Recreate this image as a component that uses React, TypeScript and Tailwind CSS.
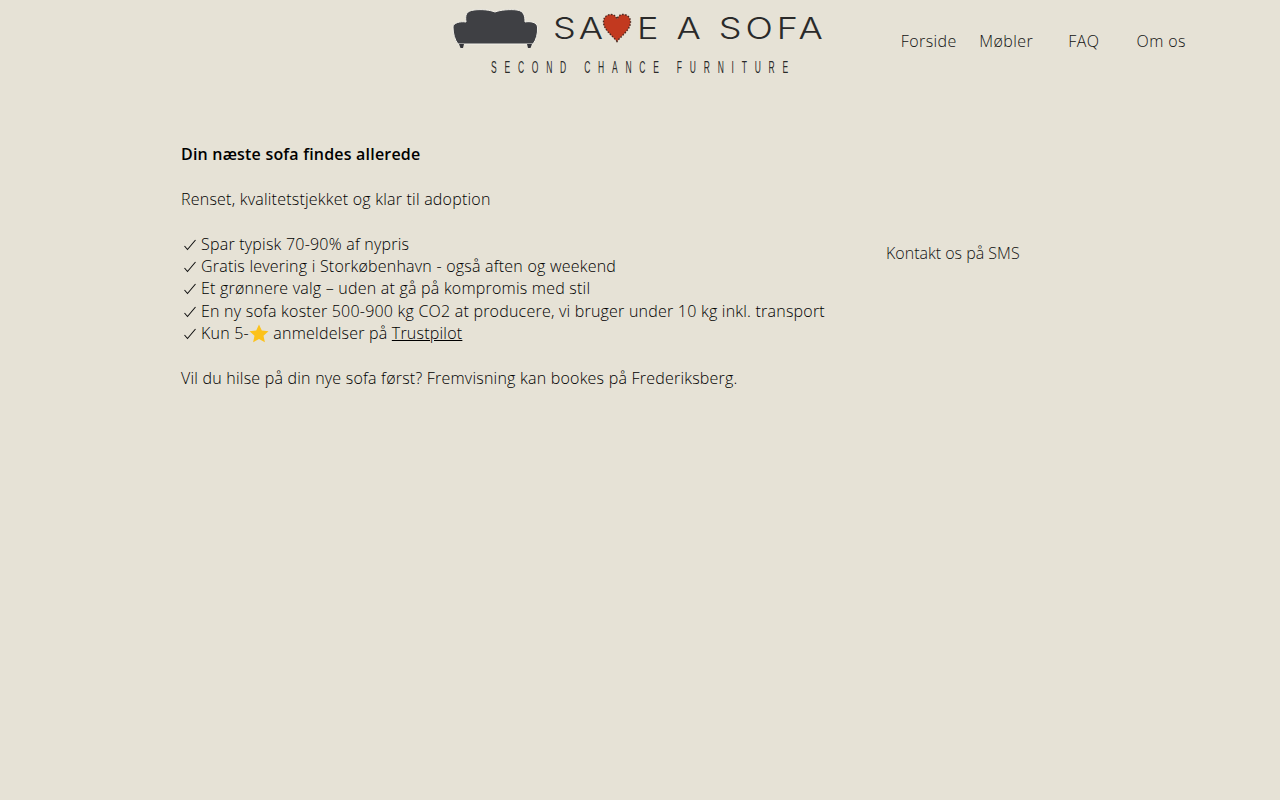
const bodyFont = "font-['Open_Sans',sans-serif]";

function SofaIcon() {
  return (
    <svg width="88" height="42" viewBox="0 0 88 42" className="block shrink-0">
      <path
        d="M14 15 C13 8 14 4 22 3 C30 2 38 3 43 5 C48 3 58 2 65 3 C72 4 73 9 73 15 C78 14 85 15 85.500 20 C86 27 84 33 81 37 L6 37 C3 33 1 27 1 20 C1 16 8 14 14 15 Z"
        fill="#3f4044"
        stroke="#f3f1ea"
        strokeWidth="1"
      />
      <path d="M7 37 L12 37 L11 41 L8.500 41 Z" fill="#34353a" />
      <path d="M75 37 L80 37 L78.500 41 L76 41 Z" fill="#34353a" />
    </svg>
  );
}

function Heart() {
  return (
    <svg width="30" height="30" viewBox="0 0 30 30" className="block shrink-0">
      <path
        d="M15 28.500 C11 23 1.500 17 1.500 9 C1.500 4 5 1.500 9 1.500 C12 1.500 14 3.500 15 6 C16 3.500 18 1.500 21 1.500 C25 1.500 28.500 4 28.500 9 C28.500 17 19 23 15 28.500 Z"
        fill="#c2391f"
        stroke="#4a2a22"
        strokeWidth="1.400"
        strokeDasharray="1.500 1.500"
      />
    </svg>
  );
}

function Star() {
  return (
    <svg width="20" height="19" viewBox="0 0 20 19" className="inline-block align-[-4px]">
      <path
        d="M10 0.500 L12.800 6.500 L19.500 7.300 L14.500 11.700 L15.900 18.300 L10 15 L4.100 18.300 L5.500 11.700 L0.500 7.300 L7.200 6.500 Z"
        fill="#fcc21b"
      />
    </svg>
  );
}

// tynd flueben, samme bredde som i originalen
function Check() {
  return (
    <svg width="20" height="12" viewBox="0 0 20 12" className="inline-block align-[-1px]">
      <path d="M3.500 7 L6.500 10.500 L14.500 1" fill="none" stroke="#111" strokeWidth="1.100" />
    </svg>
  );
}

export default function App() {
  const nav = ["Forside", "Møbler", "FAQ", "Om os"];

  return (
    <div className={`min-h-[800px] bg-[#e6e2d6] text-black ${bodyFont}`}>
      <header className="flex h-[88px]">
        {/* logo */}
        <div className="ml-[452px] w-[373px] pt-[7px]">
          <div className="flex items-start">
            <SofaIcon />
            <div className="ml-[13px] flex h-[42px] items-center font-['Inter',sans-serif] text-[30px] font-light whitespace-nowrap text-[#2a2a2a]">
              <span className="w-[49px] origin-left scale-x-[1.2] tracking-[2.500px]">SA</span>
              <Heart />
              <span className="ml-[5px] w-[184px] origin-left scale-x-[1.2] tracking-[3.300px]">E A SOFA</span>
            </div>
          </div>
          <div className="mt-[9px] ml-[39px] origin-left scale-x-50 font-['Liberation_Sans',sans-serif] text-[17px] leading-5 tracking-[15.550px] whitespace-nowrap text-[#2a2a2a]">
            SECOND CHANCE FURNITURE
          </div>
        </div>

        {/* nav */}
        <nav className="ml-[65px] grid h-fit w-[310px] grid-cols-4 pt-[30px]">
          {nav.map((item) => (
            <a key={item} className="text-center text-[16px] leading-[22px] font-light tracking-[0.400px] text-[#111]">
              {item}
            </a>
          ))}
        </nav>
      </header>

      <main className="flex pt-[55px] pl-[181px]">
        <div className="w-[705px] text-[16px] leading-[22.400px] font-light tracking-[0.220px]">
          <p className="font-semibold tracking-[0.200px]">Din næste sofa findes allerede</p>
          <br />
          <p>Renset, kvalitetstjekket og klar til adoption</p>
          <br />
          <p><Check />Spar typisk 70-90% af nypris</p>
          <p><Check />Gratis levering i Storkøbenhavn - også aften og weekend</p>
          <p><Check />Et grønnere valg – uden at gå på kompromis med stil</p>
          <p><Check />En ny sofa koster 500-900 kg CO2 at producere, vi bruger under 10 kg inkl. transport</p>
          <p>
            <Check />Kun 5-<Star /> anmeldelser på <a className="underline">Trustpilot</a>
          </p>
          <br />
          <p>Vil du hilse på din nye sofa først? Fremvisning kan bookes på Frederiksberg.</p>
        </div>
        <div className="pt-[99px] text-[16px] leading-[22px] font-[350] text-[#111]">Kontakt os på SMS</div>
      </main>
    </div>
  );
}
